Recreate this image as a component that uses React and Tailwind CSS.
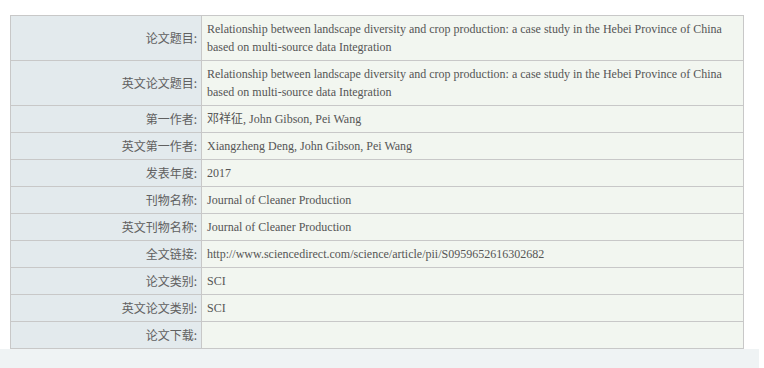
const ROWS = [
  { label: '论文题目:', value: 'Relationship between landscape diversity and crop production: a case study in the Hebei Province of China based on multi-source data Integration' },
  { label: '英文论文题目:', value: 'Relationship between landscape diversity and crop production: a case study in the Hebei Province of China based on multi-source data Integration' },
  { label: '第一作者:', value: '邓祥征, John Gibson, Pei Wang' },
  { label: '英文第一作者:', value: 'Xiangzheng Deng, John Gibson, Pei Wang' },
  { label: '发表年度:', value: '2017' },
  { label: '刊物名称:', value: 'Journal of Cleaner Production' },
  { label: '英文刊物名称:', value: 'Journal of Cleaner Production' },
  { label: '全文链接:', value: 'http://www.sciencedirect.com/science/article/pii/S0959652616302682' },
  { label: '论文类别:', value: 'SCI' },
  { label: '英文论文类别:', value: 'SCI' },
  { label: '论文下载:', value: '' },
];

export default function App() {
  return (
    <div className="w-[764px] h-[368px] bg-white overflow-hidden">
      <div className="w-[759px]">
        <div className="pt-[15px] pl-[10px] pr-[16px]">
          <table className="w-[734px] border-collapse table-fixed text-[12px] leading-[18px] text-[#555]">
            <colgroup>
              <col className="w-[191px]" />
              <col />
            </colgroup>
            <tbody>
              {ROWS.map((r) => (
                <tr key={r.label}>
                  <td
                    className="border border-[#c8c8c8] bg-[#e3eaed] text-right text-[#606060] align-middle py-[4px] pl-2 pr-[4px] whitespace-nowrap"
                    style={{ fontFamily: '"Noto Sans CJK SC", "Liberation Sans", sans-serif' }}
                  >
                    {r.label}
                  </td>
                  <td
                    className="border border-[#c8c8c8] bg-[#f2f6f0] align-middle py-[4px] pl-[5px] pr-2 h-[27px]"
                    style={{ fontFamily: '"Liberation Serif", "Noto Sans CJK SC", serif' }}
                  >
                    {r.value}
                  </td>
                </tr>
              ))}
            </tbody>
          </table>
        </div>
        <div className="h-[20px] bg-[#eff3f4]" />
      </div>
    </div>
  );
}
